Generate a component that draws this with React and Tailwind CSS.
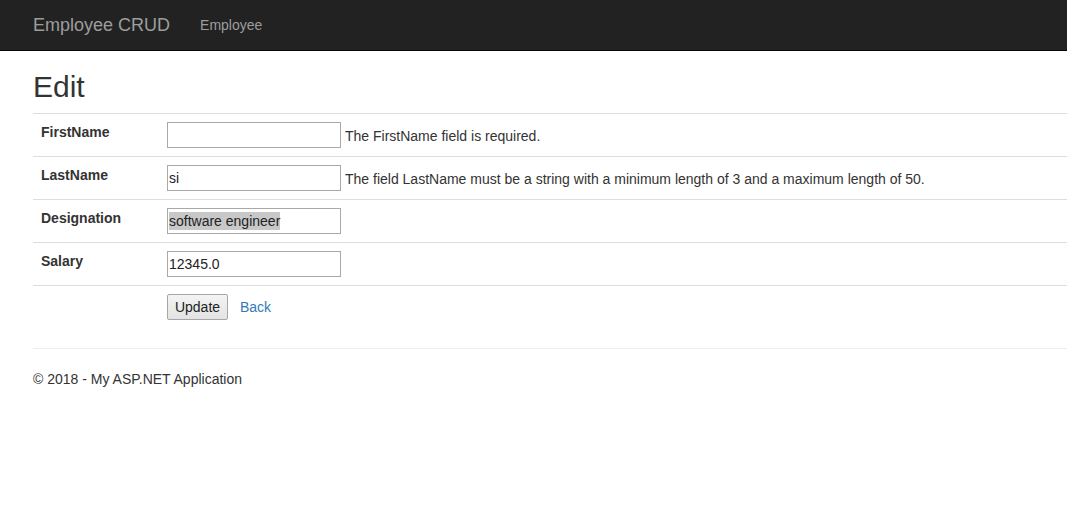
import React from "react";

const font = { fontFamily: '"Liberation Sans", Arial, sans-serif' };

function Field({ value, selected }) {
    return (
        <div className="inline-flex items-center w-[174px] h-[26px] border border-[#a9a9a9] bg-white px-[1px] text-[14px] text-[#222] align-middle">
            {selected ? (
                <span className="bg-[#c8c8c8] leading-[18px]">{value}</span>
            ) : (
                <span className="leading-[18px]">{value}</span>
            )}
        </div>
    );
}

export default function App() {
    const rows = [
        { label: "FirstName", value: "", error: "The FirstName field is required." },
        { label: "LastName", value: "si", error: "The field LastName must be a string with a minimum length of 3 and a maximum length of 50." },
        { label: "Designation", value: "software engineer", selected: true },
        { label: "Salary", value: "12345.0" },
    ];

    return (
        <div className="min-h-[509px] bg-white text-[14px] leading-[20px] text-[#333]" style={font}>
            <nav className="h-[51px] bg-[#222] border-b border-[#080808] flex items-start pl-[33px]">
                <span className="text-[18px] leading-[20px] text-[#9d9d9d] pt-[15px]">Employee CRUD</span>
                <span className="text-[14px] leading-[20px] text-[#9d9d9d] pt-[15px] ml-[30px]">Employee</span>
            </nav>

            <div className="pl-[33px]">
                <h2 className="text-[30px] leading-[33px] font-normal mt-[19px] mb-[10px] text-[#333]">Edit</h2>

                <div className="w-full">
                    {rows.map((r) => (
                        <div key={r.label} className="flex border-t border-[#ddd]">
                            <div className="w-[126px] shrink-0 p-[8px] font-bold">{r.label}</div>
                            <div className="flex items-center py-[8px] px-[8px]">
                                <Field value={r.value} selected={r.selected} />
                                {r.error && <span className="ml-[4px] mt-[1px]">{r.error}</span>}
                            </div>
                        </div>
                    ))}
                    <div className="flex border-t border-[#ddd]">
                        <div className="w-[126px] shrink-0 p-[8px]"></div>
                        <div className="flex items-center p-[8px]">
                            <button className="h-[26px] w-[61px] border border-[#a6a6a6] rounded-[2px] bg-gradient-to-b from-[#f4f4f4] to-[#e3e3e3] text-[14px] text-[#222] leading-[18px]">
                                Update
                            </button>
                            <span className="ml-[12px] text-[#337ab7]">Back</span>
                        </div>
                    </div>
                </div>

                <div className="mt-[20px] border-t border-[#eee]"></div>
                <footer className="mt-[20px]">
                    <p>© 2018 - My ASP.NET Application</p>
                </footer>
            </div>
        </div>
    );
}
